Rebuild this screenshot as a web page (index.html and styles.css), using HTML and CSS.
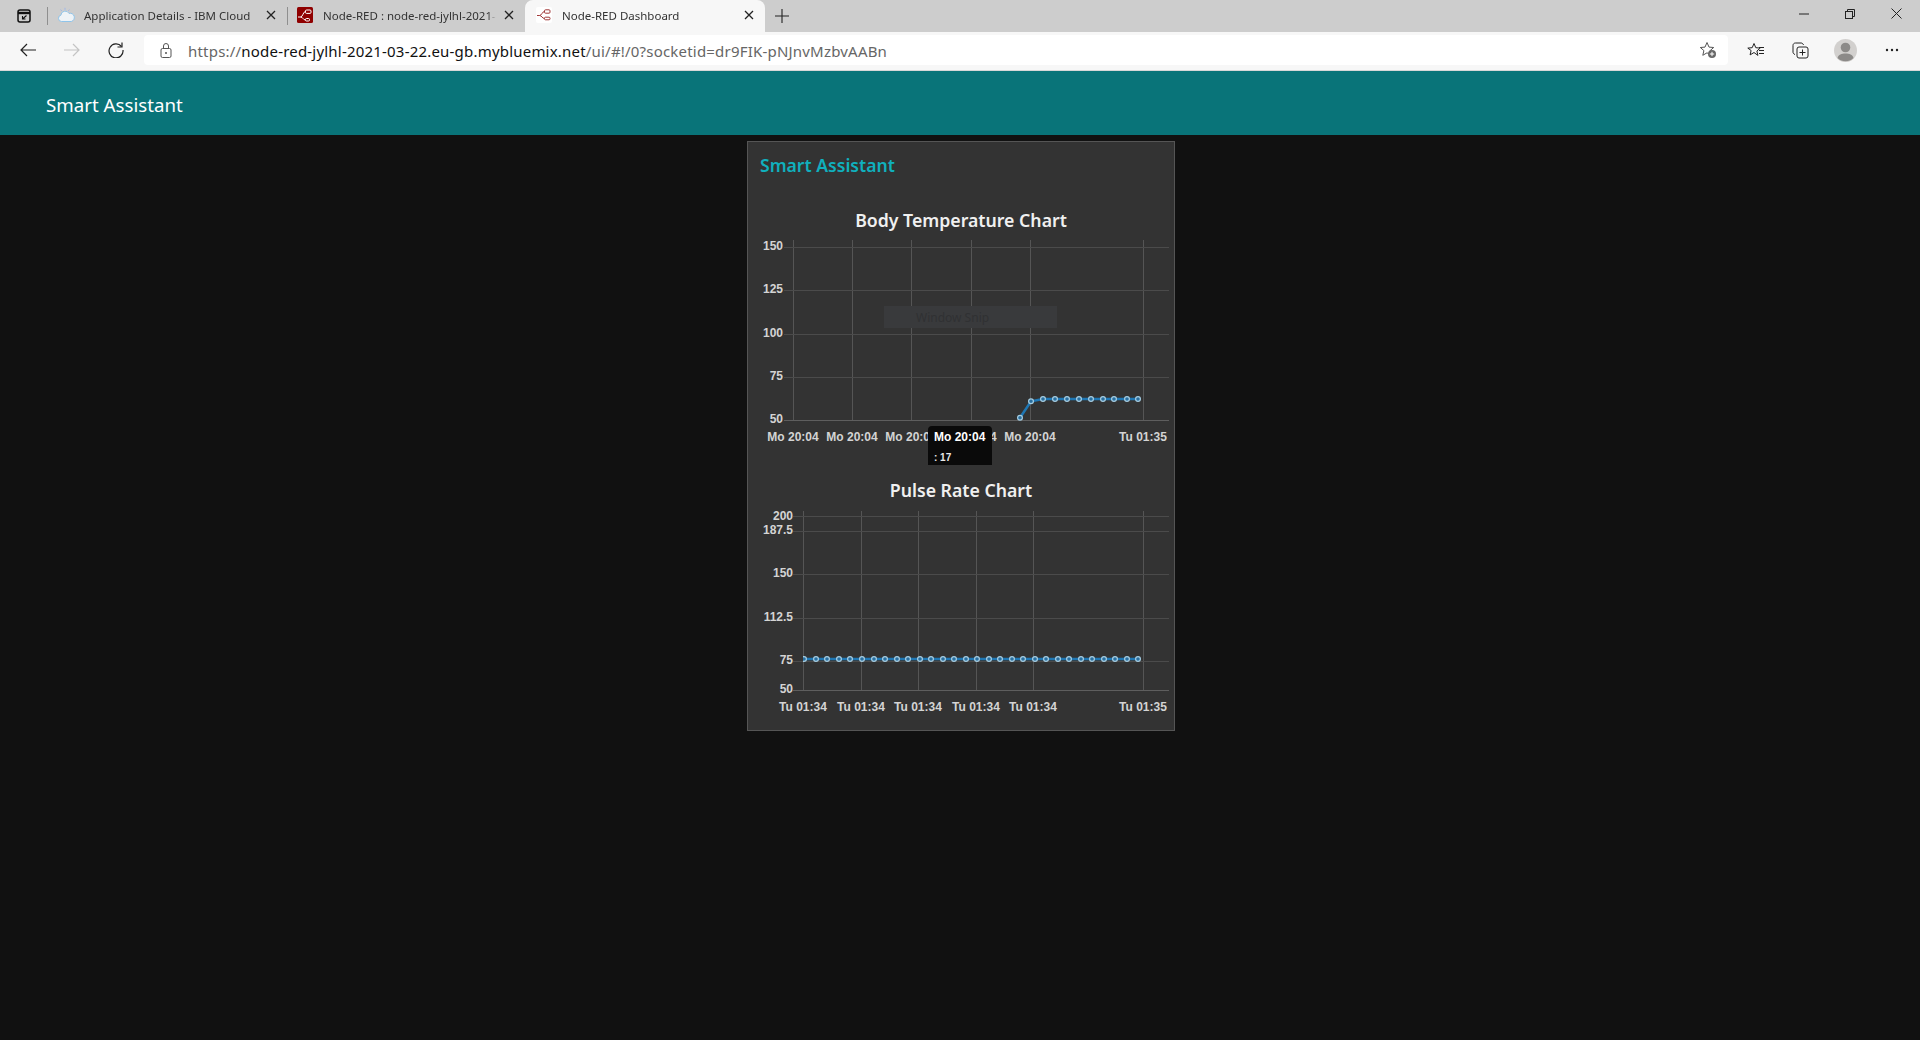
FILE: index.html
```html
<!DOCTYPE html>
<html lang="en">
<head>
  <meta charset="UTF-8" />
  <title>Node-RED Dashboard</title>
  <link rel="stylesheet" href="styles.css">
</head>
<body>
  <div class="tabstrip">
    <div class="tab-actions">
      <svg width="16" height="16" viewBox="0 0 16 16"><rect x="2" y="2" width="12" height="12" rx="2" fill="none" stroke="#111" stroke-width="1.5"/><path d="M2 5h12" stroke="#111" stroke-width="2.4"/><path d="M10.5 7.5 6.5 11M6.5 8v3h3" fill="none" stroke="#111" stroke-width="1.1"/></svg>
    </div>
    <div class="tab tab-sep">
      <svg class="favicon" width="18" height="16" viewBox="0 0 18 16"><path d="M4.5 14.5a3.2 3.2 0 0 1-.6-6.3A4.3 4.3 0 0 1 12 6.4a3.2 3.2 0 0 1 2.3 8.1z" fill="#eef3f7" stroke="#8fc4ea" stroke-width="1"/><path d="M8 .8v2M3.6 2.6l1.2 1.4M12.4 2.6l-1.2 1.4" stroke="#9fb7e8" stroke-width="1"/></svg>
      <span class="tab-title">Application Details - IBM Cloud</span>
      <svg class="tab-close" width="10" height="10" viewBox="0 0 10 10"><path d="M1 1l8 8M9 1l-8 8" stroke="#222" stroke-width="1.3"/></svg>
    </div>
    <div class="tab tab-sep tab-nodered">
      <svg class="favicon" width="16" height="16" viewBox="0 0 16 16"><rect width="16" height="16" rx="1.5" fill="#8f0000"/><path d="M1 10h2.500c2.500 0 2.500-5.500 5-5.500M3.500 10c2.500 0 2.500 3 5 3" fill="none" stroke="#fff" stroke-width="1"/><rect x="8.500" y="3" width="5.500" height="3.400" rx="1" fill="none" stroke="#fff"/><rect x="8.500" y="11.500" width="4" height="2.500" rx="1" fill="none" stroke="#fff"/></svg>
      <span class="tab-title">Node-RED : node-red-jylhl-2021-03-22</span>
      <svg class="tab-close" width="10" height="10" viewBox="0 0 10 10"><path d="M1 1l8 8M9 1l-8 8" stroke="#222" stroke-width="1.3"/></svg>
    </div>
    <div class="tab tab-active">
      <svg class="favicon" width="16" height="16" viewBox="0 0 16 16"><rect width="16" height="16" rx="2" fill="#fff"/><path d="M1 8.500h2.500c2.500 0 2.500-4 5-4M3.500 8.500c2.500 0 2.500 3 5 3" fill="none" stroke="#a23a3a" stroke-width="1"/><rect x="8.500" y="2.800" width="5.500" height="3.400" rx="1" fill="none" stroke="#a23a3a"/><rect x="8.500" y="10.200" width="5.500" height="2.600" rx="1" fill="none" stroke="#a23a3a"/></svg>
      <span class="tab-title">Node-RED Dashboard</span>
      <svg class="tab-close" width="10" height="10" viewBox="0 0 10 10"><path d="M1 1l8 8M9 1l-8 8" stroke="#222" stroke-width="1.3"/></svg>
    </div>
    <svg class="new-tab" width="14" height="14" viewBox="0 0 14 14"><path d="M7 0v14M0 7h14" stroke="#222" stroke-width="1.1"/></svg>
    <div class="window-controls">
      <svg width="10" height="10" viewBox="0 0 10 10"><path d="M0 5h10" stroke="#222"/></svg>
      <svg width="10" height="10" viewBox="0 0 10 10"><rect x=".5" y="2.500" width="7" height="7" fill="none" stroke="#222"/><path d="M2.500 2.500v-2h7v7h-2" fill="none" stroke="#222"/></svg>
      <svg width="11" height="11" viewBox="0 0 11 11"><path d="M.5.500l10 10M10.500.500l-10 10" stroke="#222"/></svg>
    </div>
  </div>

  <div class="toolbar">
    <div class="nav-buttons">
      <svg width="16" height="14" viewBox="0 0 16 14"><path d="M16 7H1M7 1 1 7l6 6" fill="none" stroke="#222" stroke-width="1.2"/></svg>
      <svg width="16" height="14" viewBox="0 0 16 14"><path d="M0 7h15M9 1l6 6-6 6" fill="none" stroke="#c4c4c4" stroke-width="1.2"/></svg>
      <svg width="16" height="16" viewBox="0 0 16 16"><path d="M13.500 4.500A7 7 0 1 0 15 8" fill="none" stroke="#222" stroke-width="1.2"/><path d="M14 .5v4.500H9.500" fill="none" stroke="#222" stroke-width="1.2"/></svg>
    </div>
    <div class="addressbar">
      <svg class="lock" width="12" height="15" viewBox="0 0 12 15"><rect x="1" y="5.500" width="10" height="9" rx="1.500" fill="none" stroke="#555"/><path d="M3.500 5.500V3a2.500 2.500 0 0 1 5 0v2.500" fill="none" stroke="#555"/><circle cx="6" cy="10" r="1" fill="#555"/></svg>
      <span class="url"><span class="url-dim">https://</span>node-red-jylhl-2021-03-22.eu-gb.mybluemix.net<span class="url-dim">/ui/#!/0?socketid=dr9FIK-pNJnvMzbvAABn</span></span>
      <svg class="fav-add" width="18" height="18" viewBox="0 0 18 18"><path d="M8 1.500l2 4.600 4.700.4-3.600 3.100 1.100 4.700-4.200-2.500-4.200 2.500 1.100-4.700L1.300 6.500 6 6.100z" fill="none" stroke="#555"/><circle cx="13" cy="13" r="4" fill="#666"/><path d="M13 10.800v4.400M10.800 13h4.400" stroke="#fff"/></svg>
    </div>
    <div class="toolbar-icons">
      <svg width="18" height="17" viewBox="0 0 18 17"><path d="M7 1.500l1.800 4.200 4.400.4-3.300 2.900 1 4.400L7 10.500l-3.900 2.400 1-4.400L.8 6.100l4.400-.4z" fill="none" stroke="#222"/><path d="M12 5.500h5M12 8.500h5M12 11.500h5" stroke="#222"/></svg>
      <svg width="17" height="17" viewBox="0 0 17 17"><path d="M3 12.500C1.500 12 1 11 1 10V3.500C1 2 2 1 3.500 1H9c1.200 0 2 .6 2.500 2" fill="none" stroke="#222"/><rect x="5" y="5" width="11" height="11" rx="2" fill="none" stroke="#222"/><path d="M10.500 7.500v6M7.500 10.500h6" stroke="#222"/></svg>
      <svg class="avatar" width="23" height="23" viewBox="0 0 23 23"><circle cx="11.500" cy="11.500" r="11.500" fill="#d2d0ce"/><circle cx="11.500" cy="8.500" r="4.800" fill="#8c8a88"/><path d="M3.500 19c1-3.500 4-4.500 8-4.500s7 1 8 4.500a11.500 11.500 0 0 1-16 0z" fill="#8c8a88"/></svg>
      <svg class="more" width="14" height="4" viewBox="0 0 14 4"><circle cx="2" cy="2" r="1.200" fill="#222"/><circle cx="7" cy="2" r="1.200" fill="#222"/><circle cx="12" cy="2" r="1.200" fill="#222"/></svg>
    </div>
  </div>

  <header class="app-header">Smart Assistant</header>

  <main class="dashboard">
    <section class="card">
      <h2 class="card-title">Smart Assistant</h2>

      <div class="chart-block chart-temp">
        <h3 class="chart-title">Body Temperature Chart</h3>
        <!-- svg origin = page 748,234 -->
        <svg class="chart" width="426" height="236" viewBox="748 234 426 236">
          <g class="grid">
            <path d="M793.500 241V422M852.500 241V422M911.500 241V422M971.500 241V422M1030.500 241V422M1143.500 241V422"/>
            <path d="M784 248.500H1169M784 291.500H1169M784 335.500H1169M784 378.500H1169"/>
            <path class="axis" d="M784 421.500H1169"/>
          </g>
          <g class="y-labels">
            <text x="783" y="251">150</text>
            <text x="783" y="294">125</text>
            <text x="783" y="338">100</text>
            <text x="783" y="381">75</text>
            <text x="783" y="424">50</text>
          </g>
          <rect class="snip-box" x="884" y="307" width="173" height="22"/>
          <text class="snip-text" x="916" y="323">Window Snip</text>
          <polyline class="line" points="1020,418.700 1031,402.300 1043,400 1055,400 1067,400 1079,400 1091,400 1103,400 1114,400 1127,400 1138,400"/>
          <g class="points">
            <circle cx="1020" cy="418.700" r="2"/><circle cx="1031" cy="402.300" r="2"/><circle cx="1043" cy="400" r="2"/>
            <circle cx="1055" cy="400" r="2"/><circle cx="1067" cy="400" r="2"/><circle cx="1079" cy="400" r="2"/>
            <circle cx="1091" cy="400" r="2"/><circle cx="1103" cy="400" r="2"/><circle cx="1114" cy="400" r="2"/>
            <circle cx="1127" cy="400" r="2"/><circle cx="1138" cy="400" r="2"/>
          </g>
          <g class="x-labels">
            <text x="793" y="442">Mo 20:04</text>
            <text x="852" y="442">Mo 20:04</text>
            <text x="911" y="442">Mo 20:04</text>
            <text x="971" y="442">Mo 20:04</text>
            <text x="1030" y="442">Mo 20:04</text>
            <text x="1143" y="442">Tu 01:35</text>
          </g>
          <path class="tooltip-bg" d="M928 466V431a4 4 0 0 1 4-4H988a4 4 0 0 1 4 4V466z"/>
          <text class="tooltip-head" x="934" y="442">Mo 20:04</text>
          <text class="tooltip-body" x="934" y="462">: 17</text>
        </svg>
      </div>

      <div class="chart-block chart-pulse">
        <h3 class="chart-title">Pulse Rate Chart</h3>
        <!-- svg origin = page 748,504 -->
        <svg class="chart" width="426" height="216" viewBox="748 504 426 216">
          <clipPath id="pulse-clip"><rect x="803" y="504" width="370" height="216"/></clipPath>
          <g class="grid">
            <path d="M803.500 512V692M861.500 512V692M918.500 512V692M976.500 512V692M1033.500 512V692M1143.500 512V692"/>
            <path d="M793 517.500H1169M793 532.500H1169M793 575.500H1169M793 619.500H1169M793 662.500H1169"/>
            <path class="axis" d="M793 691.500H1169"/>
          </g>
          <g class="y-labels">
            <text x="793" y="521">200</text>
            <text x="793" y="535">187.5</text>
            <text x="793" y="578">150</text>
            <text x="793" y="622">112.5</text>
            <text x="793" y="665">75</text>
            <text x="793" y="694">50</text>
          </g>
          <g clip-path="url(#pulse-clip)">
            <path class="line" d="M804 660H1138"/>
            <g class="points">
              <circle cx="804" cy="660" r="2"/><circle cx="816" cy="660" r="2"/><circle cx="827" cy="660" r="2"/>
              <circle cx="839" cy="660" r="2"/><circle cx="850" cy="660" r="2"/><circle cx="862" cy="660" r="2"/>
              <circle cx="874" cy="660" r="2"/><circle cx="885" cy="660" r="2"/><circle cx="897" cy="660" r="2"/>
              <circle cx="908" cy="660" r="2"/><circle cx="920" cy="660" r="2"/><circle cx="931" cy="660" r="2"/>
              <circle cx="943" cy="660" r="2"/><circle cx="954" cy="660" r="2"/><circle cx="966" cy="660" r="2"/>
              <circle cx="977" cy="660" r="2"/><circle cx="989" cy="660" r="2"/><circle cx="1000" cy="660" r="2"/>
              <circle cx="1012" cy="660" r="2"/><circle cx="1023" cy="660" r="2"/><circle cx="1035" cy="660" r="2"/>
              <circle cx="1046" cy="660" r="2"/><circle cx="1058" cy="660" r="2"/><circle cx="1069" cy="660" r="2"/>
              <circle cx="1081" cy="660" r="2"/><circle cx="1092" cy="660" r="2"/><circle cx="1104" cy="660" r="2"/>
              <circle cx="1115" cy="660" r="2"/><circle cx="1127" cy="660" r="2"/><circle cx="1138" cy="660" r="2"/>
            </g>
          </g>
          <g class="x-labels">
            <text x="803" y="712">Tu 01:34</text>
            <text x="861" y="712">Tu 01:34</text>
            <text x="918" y="712">Tu 01:34</text>
            <text x="976" y="712">Tu 01:34</text>
            <text x="1033" y="712">Tu 01:34</text>
            <text x="1143" y="712">Tu 01:35</text>
          </g>
        </svg>
      </div>
    </section>
  </main>
</body>
</html>
```

FILE: styles.css
```css
* {
  box-sizing: border-box;
}

html, body {
  height: 100%;
}

body {
  margin: 0;
  background: #111111;
  font-family: "Noto Sans", "Open Sans", sans-serif;
  overflow: hidden;
}

svg {
  display: block;
  flex: none;
}

/* browser chrome */
.tabstrip {
  display: flex;
  align-items: center;
  height: 32px;
  background: #cdcdcd;
}

.tab-actions {
  display: flex;
  justify-content: center;
  width: 47px;
}

.tab {
  display: flex;
  align-items: center;
  height: 32px;
  padding-bottom: 2px;
  font-size: 11.5px;
  color: #333;
}

.tab-sep {
  width: 240px;
  padding-left: 10px;
  padding-right: 11px;
  position: relative;
}

.tab-sep::before {
  content: "";
  position: absolute;
  left: 0;
  top: 7px;
  height: 18px;
  width: 1px;
  background: #8f8f8f;
}

.tab-nodered {
  width: 238px;
}

.tab-active {
  width: 240px;
  padding-left: 11px;
  padding-right: 11px;
  background: #f7f7f7;
  border-radius: 8px 8px 0 0;
}

.favicon {
  margin-right: 9px;
}

.tab-nodered .favicon,
.tab-active .favicon {
  margin-right: 10px;
}

.tab-title {
  flex: 1;
  white-space: nowrap;
  overflow: hidden;
  -webkit-mask-image: linear-gradient(to left, transparent 0, #000 8px);
  mask-image: linear-gradient(to left, transparent 0, #000 8px);
}

.tab-close {
  margin-left: 8px;
}

.new-tab {
  margin-left: 10px;
}

.window-controls {
  display: flex;
  align-items: center;
  gap: 36px;
  margin-left: auto;
  padding: 0 18px 5px 0;
}

.toolbar {
  display: flex;
  align-items: center;
  height: 39px;
  padding-bottom: 2px;
  background: #f7f7f7;
  border-bottom: 1px solid #d8d8d8;
}

.nav-buttons {
  display: flex;
  align-items: center;
  gap: 28px;
  width: 144px;
  padding-left: 20px;
}

.addressbar {
  display: flex;
  align-items: center;
  width: 1584px;
  height: 30px;
  padding: 0 11px 0 16px;
  background: #fff;
  border-radius: 4px;
}

.url {
  flex: 1;
  margin-left: 16px;
  padding-top: 1px;
  font-size: 15px;
  letter-spacing: 0.2px;
  color: #111;
  white-space: nowrap;
}

.url-dim {
  color: #666;
}

.toolbar-icons {
  display: flex;
  align-items: center;
  gap: 27px;
  padding-left: 19px;
}

.avatar {
  margin: 0 -2px;
}

.more {
  margin-left: 3px;
}

/* dashboard */
.app-header {
  display: flex;
  align-items: center;
  height: 64px;
  padding: 3px 0 0 46px;
  background: #097479;
  color: #fff;
  font-size: 18.7px;
}

.dashboard {
  display: flex;
  justify-content: center;
  padding: 6px 0 0 2px;
}

.card {
  width: 428px;
  height: 590px;
  background: #333333;
  border: 1px solid #555555;
}

.card-title {
  margin: 0;
  padding: 11px 0 0 12px;
  font-size: 17.6px;
  line-height: 25px;
  font-weight: 600;
  color: #10b0bd;
}

.chart-title {
  margin: 0;
  text-align: center;
  font-size: 17.7px;
  line-height: 24px;
  font-weight: 600;
  color: #f0f0f0;
}

.chart-temp {
  padding-top: 30px;
}

.chart-pulse {
  padding-top: 9px;
}

.chart {
  margin-top: 1px;
}

/* chart canvas */
.grid path {
  fill: none;
  stroke: #4b4b4b;
  stroke-width: 1;
}

.grid .axis {
  stroke: #5e5e5e;
}

.grid path:first-child {
  stroke: #555555;
}

.y-labels text,
.x-labels text {
  font-family: "Liberation Sans", Arial, sans-serif;
  font-size: 12px;
  font-weight: bold;
  fill: #d4d4d4;
}

.y-labels text {
  text-anchor: end;
}

.x-labels text {
  text-anchor: middle;
}

.snip-box {
  fill: #393a3c;
}

.snip-text {
  font-family: "Noto Sans", sans-serif;
  font-size: 12px;
  fill: #303133;
}

.line {
  fill: none;
  stroke: #1f77b4;
  stroke-width: 2.5;
}

.points circle {
  r: 2.4px;
  fill: #2a6f9f;
  stroke: #a6cee3;
  stroke-width: 1.2;
}

.tooltip-bg {
  fill: #0a0a0a;
}

.tooltip-head {
  font-family: "Liberation Sans", Arial, sans-serif;
  font-size: 12px;
  font-weight: bold;
  fill: #fff;
}

.tooltip-body {
  font-family: "Liberation Sans", Arial, sans-serif;
  font-size: 10px;
  font-weight: bold;
  fill: #e8e8e8;
}
```
